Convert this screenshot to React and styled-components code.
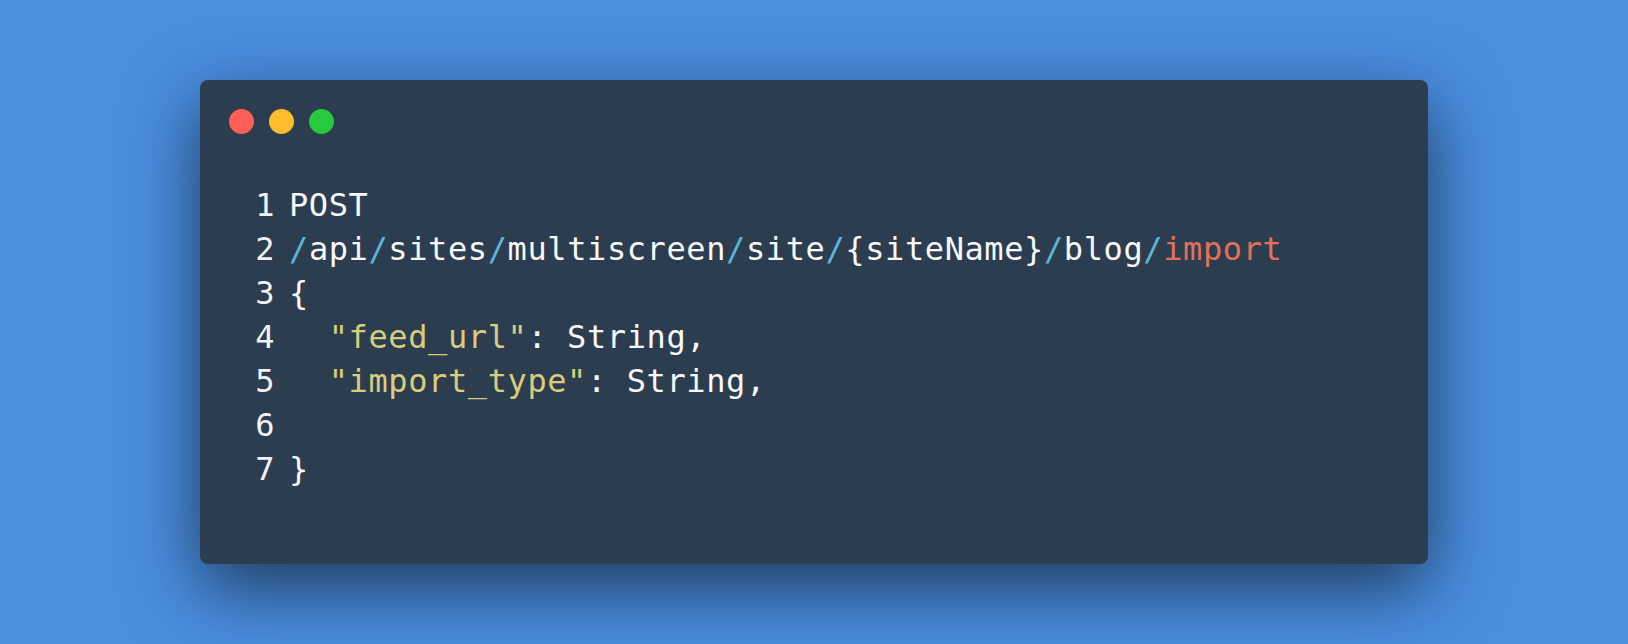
import React from "react";
import styled, { createGlobalStyle } from "styled-components";

const Global = createGlobalStyle`
  html, body { margin: 0; padding: 0; }
  body { background: #4a8ee0; }
`;

const Page = styled.div`
  width: 1628px;
  height: 644px;
  box-sizing: border-box;
  padding: 80px 200px;
  background: #4a8ee0;
  display: flex;
  overflow: hidden;
`;

const Window = styled.div`
  flex: 1;
  background: #2c3d4f;
  border-radius: 8px;
  box-shadow: 0 24px 72px rgba(0, 0, 0, 0.6);
  display: flex;
  flex-direction: column;
  padding: 29px 0 0 29px;
  box-sizing: border-box;
`;

const Controls = styled.div`
  display: flex;
  gap: 15px;
`;

const Dot = styled.span`
  width: 25px;
  height: 25px;
  border-radius: 50%;
  background: ${(p) => p.$color};
`;

const Code = styled.div`
  margin-top: 49px;
  padding-left: 26px;
  font-family: "DejaVu Sans Mono", monospace;
  font-size: 32px;
  letter-spacing: 0.6px;
  line-height: 44px;
  color: #f6f8fa;
`;

const Line = styled.div`
  display: flex;
  white-space: pre;
`;

const Num = styled.span`
  width: 20px;
  margin-right: 14px;
  text-align: right;
  color: #f0f3f6;
`;

const Tok = styled.span`
  color: ${(p) =>
    p.$k === "slash"
      ? "#5bb6d9"
      : p.$k === "kw"
      ? "#e2705a"
      : p.$k === "str"
      ? "#d8cc7e"
      : "#f6f8fa"};
`;

const S = () => <Tok $k="slash">/</Tok>;

const lines = [
  <>POST</>,
  <>
    <S />api<S />sites<S />multiscreen<S />site<S />
    {"{siteName}"}
    <S />blog<S />
    <Tok $k="kw">import</Tok>
  </>,
  <>{"{"}</>,
  <>
    {"  "}
    <Tok $k="str">"feed_url"</Tok>: String,
  </>,
  <>
    {"  "}
    <Tok $k="str">"import_type"</Tok>: String,
  </>,
  <>{" "}</>,
  <>{"}"}</>,
];

export default function App() {
  return (
    <>
      <Global />
      <Page>
        <Window>
          <Controls>
            <Dot $color="#ff5f56" />
            <Dot $color="#ffbd2e" />
            <Dot $color="#27c93f" />
          </Controls>
          <Code>
            {lines.map((l, i) => (
              <Line key={i}>
                <Num>{i + 1}</Num>
                <span>{l}</span>
              </Line>
            ))}
          </Code>
        </Window>
      </Page>
    </>
  );
}
